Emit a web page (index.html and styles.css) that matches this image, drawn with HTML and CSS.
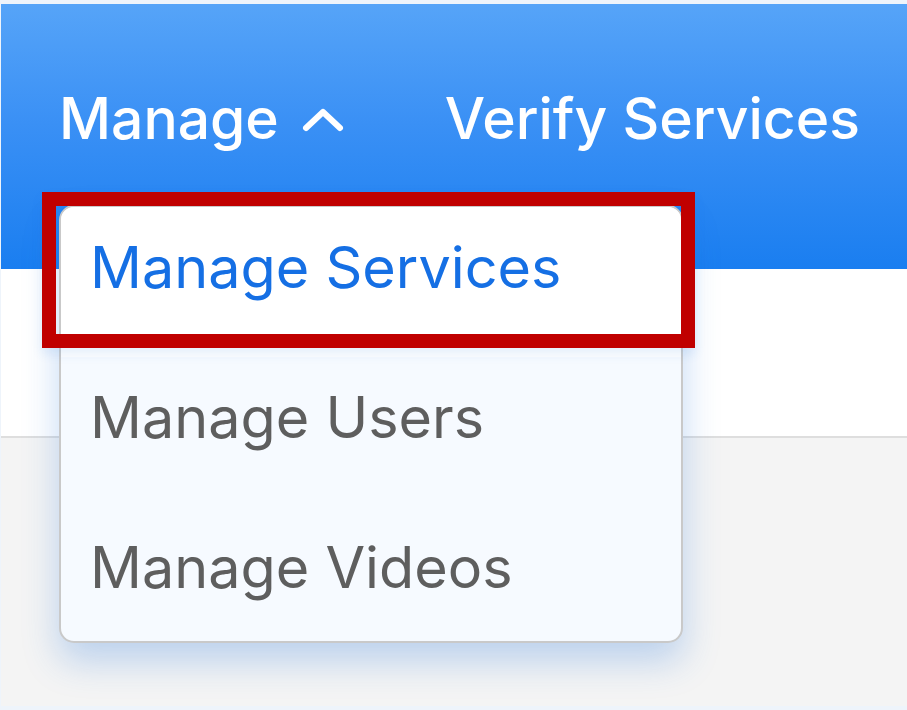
FILE: index.html
```html
<!DOCTYPE html>
<html lang="en">
<head>
<meta charset="utf-8">
<title>Manage menu</title>
<link rel="stylesheet" href="styles.css">
</head>
<body>
<div class="page">
  <header class="topbar">
    <nav class="nav">
      <div class="nav-item nav-manage">
        <span class="nav-label">Manage</span>
        <svg class="chev" viewBox="0 0 42 24" width="42" height="24" aria-hidden="true">
          <path d="M4 20 L21 4 L38 20" fill="none" stroke="#fff" stroke-width="6" stroke-linecap="round" stroke-linejoin="round"/>
        </svg>
      </div>
      <div class="nav-item"><span class="nav-label">Verify Services</span></div>
    </nav>
  </header>
  <section class="band-white"></section>
  <section class="band-gray"></section>

  <ul class="dropdown">
    <li class="dd-item active">Manage Services</li>
    <li class="dd-item">Manage Users</li>
    <li class="dd-item">Manage Videos</li>
  </ul>
  <div class="highlight-box"></div>
</div>
</body>
</html>
```

FILE: styles.css
```css
html, body {
  margin: 0;
  padding: 0;
  background: #eef4fb;
}

body {
  width: 907px;
  height: 710px;
  overflow: hidden;
  font-family: Inter, "Noto Sans", sans-serif;
}

.page {
  position: relative;
  padding: 4px 0 0 1px;
  display: flex;
  flex-direction: column;
  overflow: hidden;
  height: 710px;
  box-sizing: border-box;
}

.topbar {
  height: 265px;
  background: linear-gradient(to bottom, #56a4f8 0%, #3a90f5 45%, #1a7ef0 100%);
  box-sizing: border-box;
  padding: 86px 0 0 58px;
  overflow: hidden;
}

.nav {
  display: flex;
  align-items: flex-start;
}

.nav-item {
  display: flex;
  align-items: center;
  color: #fff;
  font-size: 57px;
  line-height: 57px;
  font-weight: 500;
  white-space: nowrap;
}

.nav-manage {
  margin-right: 101px;
}

.chev {
  margin-left: 23px;
  margin-top: 2px;
}

.band-white {
  height: 167px;
  background: #ffffff;
  border-bottom: 2px solid #dedede;
}

.band-gray {
  height: 268px;
  background: #f4f4f4;
}

.dropdown {
  position: absolute;
  left: 59px;
  top: 205px;
  width: 624px;
  height: 438px;
  box-sizing: border-box;
  margin: 0;
  padding: 0;
  list-style: none;
  background: #f6faff;
  border: 2px solid #c9c9c9;
  border-radius: 15px;
  overflow: hidden;
  box-shadow: 0 18px 36px rgba(40, 120, 220, 0.28);
}

.dd-item {
  height: 150px;
  box-sizing: border-box;
  padding: 32px 0 0 29px;
  font-size: 57.5px;
  line-height: 57.5px;
  color: #5e5e5e;
  white-space: nowrap;
}

.dd-item.active {
  background: #ffffff;
  color: #156fe4;
}

.highlight-box {
  position: absolute;
  left: 42px;
  top: 192px;
  width: 653px;
  height: 156px;
  box-sizing: border-box;
  border: 14px solid #c00000;
  box-shadow: 0 6px 10px rgba(40, 120, 220, 0.12);
}
```
